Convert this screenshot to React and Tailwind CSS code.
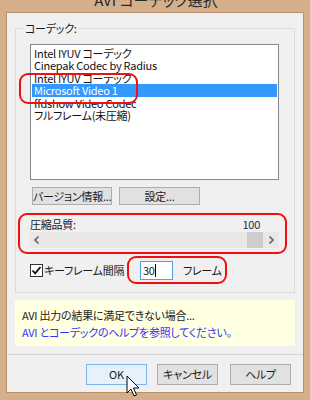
import React from 'react';

const codecs = [
  'Intel IYUV コーデック',
  'Cinepak Codec by Radius',
  'Intel IYUV コーデック',
  'Microsoft Video 1',
  'ffdshow Video Codec',
  'フルフレーム(未圧縮)',
];

const App = () => {
  const selected = 3;

  return (
    <div className="relative w-[310px] h-[400px] overflow-hidden bg-[#d5af8b] font-['Noto_Sans_CJK_JP',sans-serif] [font-feature-settings:'palt'] text-[11px] tracking-[-0.25px] text-[#1a1a1a]">
      {/* title bar, mostly scrolled off the top */}
      <div className="h-[12px] overflow-hidden">
        <div className="-mt-[9px] text-center text-[15px] leading-[18px] tracking-normal text-[#2a2a2a] pl-[2px]">AVI コーデック選択</div>
      </div>

      {/* window client */}
      <div className="ml-[6px] w-[298px] h-[381px] border border-[#b8916c] bg-[#f0f0f0] flex flex-col">
        <fieldset className="ml-[8px] mt-[8px] w-[280px] border border-[#dcdcdc] pb-[12px]">
          <legend className="ml-[7px] px-[2px] leading-[14px]">コーデック:</legend>

          <div className="ml-[14px] mt-[9px] w-[249px] h-[136px] border border-[#828790] bg-white pt-[2px] px-[1px]">
            {codecs.map((name, i) => (
              <div
                key={i}
                className={
                  'h-[12.4px] leading-[12.4px] pl-[2px] whitespace-nowrap ' +
                  (i === selected ? 'bg-[#3399ff] text-white' : 'text-[#111]')
                }
              >
                {name}
              </div>
            ))}
          </div>

          <div className="flex ml-[16px] mt-[7px] gap-[7px]">
            <button className="w-[80px] h-[18px] border border-[#adadad] bg-[#e1e1e1] leading-[16px] whitespace-nowrap">バージョン情報...</button>
            <button className="w-[81px] h-[18px] border border-[#adadad] bg-[#e1e1e1] leading-[16px] whitespace-nowrap">設定...</button>
          </div>

          <div className="flex justify-between ml-[14px] mr-[34px] mt-[12px] leading-[14px]">
            <span>圧縮品質:</span>
            <span className="text-[#1e2a5a]">100</span>
          </div>

          <div className="ml-[13px] mt-[1px] w-[250px] h-[16px] bg-[#e8e8e8] flex items-center">
            <svg width="16" height="16" viewBox="0 0 16 16" className="shrink-0">
              <path d="M9.5 4.5 L6 8 L9.5 11.5" fill="none" stroke="#606060" strokeWidth="1.6" />
            </svg>
            <div className="flex-1" />
            <div className="w-[16px] h-[16px] bg-[#cdcdcd]" />
            <svg width="16" height="16" viewBox="0 0 16 16" className="shrink-0">
              <path d="M6.5 4.5 L10 8 L6.5 11.5" fill="none" stroke="#606060" strokeWidth="1.6" />
            </svg>
          </div>

          <div className="flex items-center ml-[14px] mt-[13px] h-[19px]">
            <div className="w-[13px] h-[13px] border border-[#333] bg-white flex items-center justify-center">
              <svg width="11" height="11" viewBox="0 0 11 11">
                <path d="M1.5 5.5 L4.2 8.3 L9.5 2" fill="none" stroke="#111" strokeWidth="1.8" />
              </svg>
            </div>
            <span className="ml-[1px] w-[96px] whitespace-nowrap">キーフレーム間隔</span>
            <div className="w-[33px] h-[19px] border border-[#569de5] bg-white flex items-center pl-[2px]">
              <span>30</span>
              <span className="w-[1px] h-[13px] bg-black" />
            </div>
            <span className="ml-[10px]">フレーム</span>
          </div>
        </fieldset>

        <div className="ml-[8px] mt-[7px] w-[280px] h-[46px] bg-[#ffffe1] px-[7px] pt-[7px] leading-[16px]">
          <div>AVI 出力の結果に満足できない場合...</div>
          <div className="text-[#3333ff] mt-[1px]">AVI とコーデックのヘルプを参照してください。</div>
        </div>

        <div className="mt-[8px] h-[1px] bg-[#d5d5d5]" />

        <div className="flex mt-[9px]">
          <button className="ml-[79px] w-[61px] h-[21px] border border-[#7eb4ea] bg-[#e5f1fb] leading-[19px]">OK</button>
          <button className="ml-[10px] w-[61px] h-[21px] border border-[#adadad] bg-[#e1e1e1] leading-[19px]">キャンセル</button>
          <button className="ml-[12px] w-[61px] h-[21px] border border-[#adadad] bg-[#e1e1e1] leading-[19px]">ヘルプ</button>
        </div>
      </div>

      {/* red annotation marks */}
      <div className="absolute left-[19px] top-[73px] w-[119px] h-[31px] rounded-[9px] border-[2.5px] border-[#f01010]" />
      <div className="absolute left-[18px] top-[213px] w-[269px] h-[41px] rounded-[9px] border-[2.5px] border-[#f01010]" />
      <div className="absolute left-[127px] top-[256px] w-[100px] h-[28px] rounded-[9px] border-[2.5px] border-[#f01010]" />

      {/* mouse pointer */}
      <svg className="absolute left-[126px] top-[375px]" width="14" height="26" viewBox="0 0 14 26">
        <path d="M1 1 L1 18 L5 14 L8 21 L10.5 20 L7.5 13 L13 13 Z" fill="#fff" stroke="#000" strokeWidth="1" strokeLinejoin="round" />
      </svg>
    </div>
  );
};

export default App;
